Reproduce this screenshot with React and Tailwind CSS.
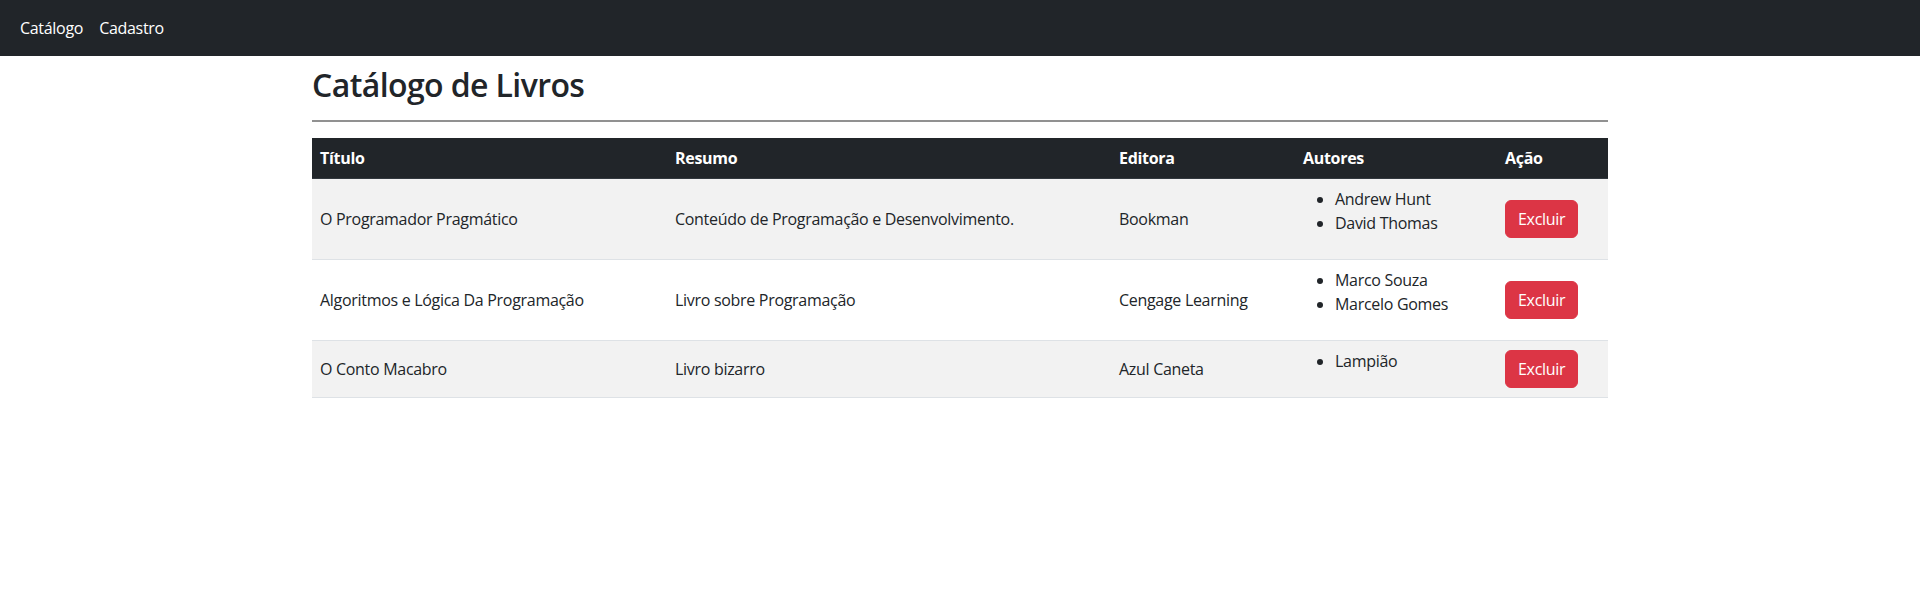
const livros = [
  {
    titulo: 'O Programador Pragmático',
    resumo: 'Conteúdo de Programação e Desenvolvimento.',
    editora: 'Bookman',
    autores: ['Andrew Hunt', 'David Thomas'],
  },
  {
    titulo: 'Algoritmos e Lógica Da Programação',
    resumo: 'Livro sobre Programação',
    editora: 'Cengage Learning',
    autores: ['Marco Souza', 'Marcelo Gomes'],
  },
  {
    titulo: 'O Conto Macabro',
    resumo: 'Livro bizarro',
    editora: 'Azul Caneta',
    autores: ['Lampião'],
  },
]

function Menu() {
  return (
    <nav className="bg-[#212529] py-2">
      <ul className="flex px-3">
        <li><a href="#" className="block px-2 py-2 leading-6 text-white">Catálogo</a></li>
        <li><a href="#" className="block px-2 py-2 leading-6 text-white">Cadastro</a></li>
      </ul>
    </nav>
  )
}

function LinhaLivro({ livro, i }) {
  return (
    <tr className={i % 2 === 0 ? 'bg-[#f2f2f2] border-b border-[#dee2e6]' : 'bg-white border-b border-[#dee2e6]'}>
      <td className="p-2 align-middle">{livro.titulo}</td>
      <td className="p-2 align-middle">{livro.resumo}</td>
      <td className="p-2 align-middle">{livro.editora}</td>
      <td className="p-2 align-middle">
        <ul className="list-disc pl-8 mb-4">
          {livro.autores.map((autor, j) => (
            <li key={j}>{autor}</li>
          ))}
        </ul>
      </td>
      <td className="p-2 align-middle">
        <button className="bg-[#dc3545] text-white border border-[#dc3545] rounded-md px-3 py-1.5 leading-6">Excluir</button>
      </td>
    </tr>
  )
}

export default function App() {
  return (
    <div className="min-h-screen bg-white text-[#212529] text-base leading-6 tracking-[-0.3px]" style={{ fontFamily: '"Segoe UI", "Open Sans", sans-serif' }}>
      <Menu />
      <main className="max-w-[1320px] mx-auto px-3">
        <h2 className="text-[32px] font-semibold leading-[1.2] tracking-[-0.6px] mt-[10px] mb-2">Catálogo de Livros</h2>
        <hr className="border-0 border-t-2 border-[#919191] my-4" />
        <table className="w-full border-collapse text-left">
          <thead>
            <tr className="bg-[#212529] text-white border-b border-[#32383e]">
              <th className="p-2 w-[355px] font-bold">Título</th>
              <th className="p-2 w-[444px] font-bold">Resumo</th>
              <th className="p-2 w-[184px] font-bold">Editora</th>
              <th className="p-2 w-[202px] font-bold">Autores</th>
              <th className="p-2 font-bold">Ação</th>
            </tr>
          </thead>
          <tbody>
            {livros.map((livro, i) => (
              <LinhaLivro key={i} livro={livro} i={i} />
            ))}
          </tbody>
        </table>
      </main>
    </div>
  )
}
